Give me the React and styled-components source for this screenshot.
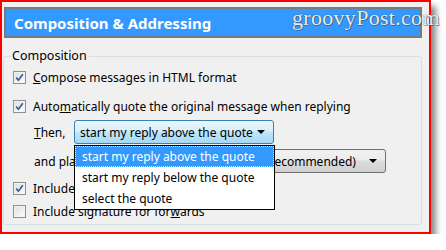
import React from 'react';
import styled, {createGlobalStyle} from 'styled-components';

const Global = createGlobalStyle`
    body {
        margin: 0;
        background: #ffffff;
        font-family: "Noto Sans", "Open Sans", sans-serif;
    }
`;

const Frame = styled.div`
    position: relative;
    width: 431px;
    height: 234px;
    box-sizing: border-box;
    border: 2px solid #ff0000;
    background: #f0f0f0;
    box-shadow: 5px 6px 6px rgba(0, 0, 0, 0.45);
    display: flex;
    flex-direction: column;
`;

const Header = styled.div`
    height: 31px;
    box-sizing: border-box;
    margin: 5px 7px 0 2px;
    border: 2px solid #7a7a7a;
    background: #3399ff;
    color: #ffffff;
    font-weight: bold;
    font-size: 15px;
    display: flex;
    align-items: center;
    padding-left: 8px;
`;

// watermark sits over the header and spills past the frame edge
const Watermark = styled.div`
    position: absolute;
    top: 3px;
    left: 290px;
    font-family: "Liberation Serif", "DejaVu Serif", serif;
    font-size: 22px;
    letter-spacing: 0.3px;
    color: #e6edf3;
    text-shadow: 0 0 1px #3a3a3a, 1px 1px 0 rgba(60, 60, 60, 0.45);
    white-space: nowrap;
    z-index: 3;
`;

const Group = styled.fieldset`
    flex: 1;
    margin: 10px 7px 7px 1px;
    padding: 0 0 0 9px;
    border: 1px solid #d5dfe5;
    border-radius: 3px;
    font-size: 12px;
    color: #000000;
    min-width: 0;
`;

const Legend = styled.legend`
    margin-left: -3px;
    padding: 0 2px;
    font-size: 12.5px;
    line-height: 16px;
`;

const Row = styled.div`
    position: relative;
    display: flex;
    align-items: center;
    height: ${p => p.$h || 20}px;
    margin-top: ${p => p.$mt || 0}px;
    margin-left: ${p => p.$indent || 0}px;
    gap: ${p => p.$gap || 7}px;
    white-space: nowrap;
`;

const Box = styled.span`
    width: 13px;
    height: 13px;
    box-sizing: border-box;
    border: 1px solid #8e8f8f;
    background: linear-gradient(135deg, #dcdcdc, #ffffff);
    box-shadow: inset 0 0 0 1px #f4f4f4;
    display: flex;
    align-items: center;
    justify-content: center;
    flex-shrink: 0;
`;

const Label = styled.span`
    font-size: 12px;
    flex: 0 0 ${p => (p.$w ? `${p.$w}px` : 'auto')};
`;

const Select = styled.div`
    position: relative;
    height: ${p => p.$h}px;
    width: ${p => p.$w}px;
    flex-shrink: 0;
    box-sizing: border-box;
    border: 1px solid ${p => (p.$hot ? '#3c7fb1' : '#707070')};
    border-radius: 3px;
    background: ${p => p.$hot
        ? 'linear-gradient(#eaf6fd 0%, #d9f0fc 45%, #bee6fd 50%, #a7d9f5 100%)'
        : 'linear-gradient(#f2f2f2 0%, #ebebeb 45%, #dddddd 50%, #cfcfcf 100%)'};
    display: flex;
    align-items: center;
    padding: 0 8px 0 5px;
    font-size: 12px;
`;

const SelectText = styled.span`
    flex: 1;
`;

const Arrow = styled.span`
    width: 0;
    height: 0;
    border-left: 4px solid transparent;
    border-right: 4px solid transparent;
    border-top: 4px solid #000000;
`;

const List = styled.div`
    position: absolute;
    top: 24px;
    left: -1px;
    width: 201px;
    box-sizing: border-box;
    border: 1px solid #000000;
    background: #ffffff;
    z-index: 2;
`;

const Item = styled.div`
    height: 21px;
    box-sizing: border-box;
    display: flex;
    align-items: center;
    padding-left: 6px;
    font-size: 12px;
    background: ${p => (p.$active ? '#3399ff' : '#ffffff')};
    color: ${p => (p.$active ? '#ffffff' : '#000000')};
    border: 1px dotted ${p => (p.$active ? '#f2e2a8' : 'transparent')};
`;

const Check = () => (
    <svg width="9" height="9" viewBox="0 0 9 9">
        <path d="M1.2 4.6 L3.4 7.2 L7.8 1.2" fill="none" stroke="#3b5a9c" strokeWidth="1.7"/>
    </svg>
);

const CheckBox = ({checked}) => <Box>{checked && <Check/>}</Box>;

export default function App() {
    return (
        <>
            <Global/>
            <Frame>
                <Header>Composition &amp; Addressing</Header>
                <Watermark>groovyPost.com</Watermark>
                <Group>
                    <Legend>Composition</Legend>
                    <Row $mt={3}>
                        <CheckBox checked/>
                        <Label><u>C</u>ompose messages in HTML format</Label>
                    </Row>
                    <Row $mt={9}>
                        <CheckBox checked/>
                        <Label>Auto<u>m</u>atically quote the original message when replying</Label>
                    </Row>
                    <Row $h={24} $mt={4} $indent={21} $gap={0}>
                        <Label $w={33}><u>T</u>hen,</Label>
                        <Select $hot $w={200} $h={24}>
                            <SelectText>start my reply above the quote</SelectText>
                            <Arrow/>
                            <List>
                                <Item $active>start my reply above the quote</Item>
                                <Item>start my reply below the quote</Item>
                                <Item>select the quote</Item>
                            </List>
                        </Select>
                    </Row>
                    <Row $h={24} $mt={5} $indent={21} $gap={6}>
                        <Label>and place my si<u>g</u>nature</Label>
                        <Select $w={214} $h={24}>
                            <SelectText>below my reply (recommended)</SelectText>
                            <Arrow/>
                        </Select>
                    </Row>
                    <Row $mt={5}>
                        <CheckBox checked/>
                        <Label>Include signature for <u>r</u>eplies</Label>
                    </Row>
                    <Row $mt={3}>
                        <CheckBox/>
                        <Label>Include signature for for<u>w</u>ards</Label>
                    </Row>
                </Group>
            </Frame>
        </>
    );
}
